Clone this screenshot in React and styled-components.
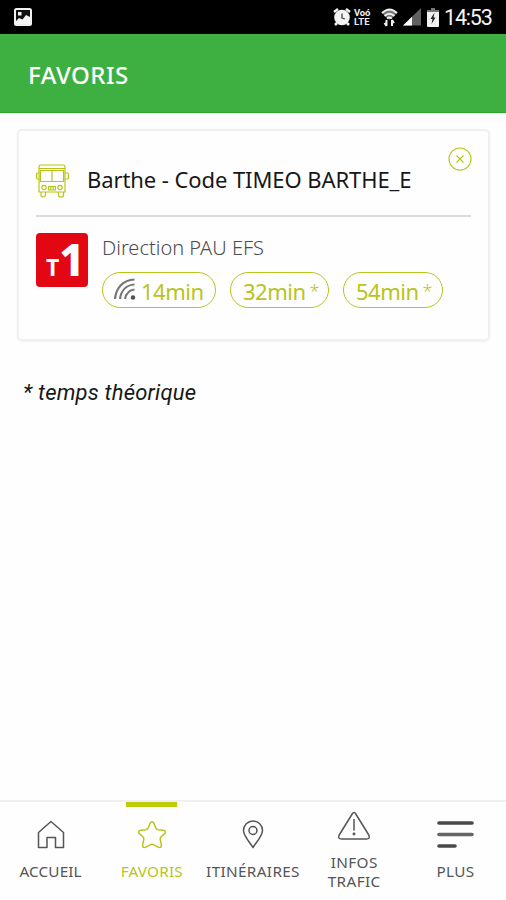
import React from "react";
import styled, { createGlobalStyle } from "styled-components";

const LIME = "#b9c41b";

const GlobalStyle = createGlobalStyle`
  *, *::before, *::after { box-sizing: border-box; }
  body { margin: 0; background: #fff; font-family: "Noto Sans", "Open Sans", sans-serif; }
`;

const Screen = styled.div`
  width: 506px;
  height: 900px;
  display: flex;
  flex-direction: column;
  background: #fefefe;
  overflow: hidden;
`;

const StatusBar = styled.div`
  height: 34px;
  flex: none;
  background: #000;
  display: flex;
  align-items: center;
  justify-content: space-between;
  padding: 0 14px;
`;

const StatusIcons = styled.div`
  display: flex;
  align-items: center;
  height: 34px;
`;

const StatusGlyph = styled.svg`
  display: block;
  flex: none;
  margin-right: ${(p) => p.$gap || 0}px;
`;

const Volte = styled.div`
  width: 18px;
  margin-right: 9px;
  display: flex;
  flex-direction: column;
  gap: 1px;
  color: #eee;
  font: 700 9.5px/8px Roboto, sans-serif;
  white-space: nowrap;
`;

const VolteLine = styled.span`
  display: block;
  height: 8px;
  letter-spacing: ${(p) => p.$spacing || 0}px;
`;

const Clock = styled.div`
  width: 48px;
  color: #f4f4f4;
  font: 400 21.5px/34px Roboto, sans-serif;
  letter-spacing: -1.2px;
  white-space: nowrap;
  padding-top: 2px;
`;

const Header = styled.header`
  height: 79px;
  flex: none;
  background: #3eb041;
  border-bottom: 1px solid #25a32a;
  padding: 2px 0 0 28px;
  display: flex;
  align-items: center;
`;

const HeaderTitle = styled.h1`
  margin: 0;
  color: #fff;
  font-size: 24px;
  font-weight: 500;
  letter-spacing: 0.5px;
`;

const Main = styled.main`
  flex: 1;
  padding: 16px 16px 0 17px;
`;

const Card = styled.section`
  height: 212px;
  border: 2px solid #f0f0f0;
  border-radius: 5px;
  background: #fefefe;
  box-shadow: 0 1px 3px rgba(0, 0, 0, 0.05);
  padding: 0 17px;
`;

const StopRow = styled.div`
  height: 86px;
  border-bottom: 2px solid #dcdcdc;
  display: flex;
  align-items: flex-start;
`;

const BusIcon = styled.svg`
  flex: none;
  margin: 33px 18px 0 0;
`;

const StopName = styled.h2`
  margin: 30px 0 0;
  flex: 1;
  color: #171717;
  font-size: 22px;
  line-height: 36px;
  font-weight: 400;
  letter-spacing: -0.08px;
  white-space: nowrap;
`;

const CloseButton = styled.button`
  display: block;
  width: 24px;
  height: 24px;
  margin: 16px -1px 0 0;
  padding: 0;
  border: 0;
  background: none;
`;

const LineRow = styled.div`
  display: flex;
  padding-top: 16px;
`;

const LineBadge = styled.div`
  width: 52px;
  height: 54px;
  flex: none;
  border-radius: 4px;
  background: #e30613;
  color: #fff;
  display: flex;
  align-items: baseline;
  font-weight: 700;
  font-size: 23px;
  line-height: 53px;
  padding-left: 10px;
`;

const LineNumber = styled.span`
  font-size: 44px;
  font-weight: 800;
`;

const Departures = styled.div`
  margin-left: 14px;
`;

const Direction = styled.div`
  height: 24px;
  color: #4c4c4c;
  font-size: 20px;
  line-height: 29px;
  font-weight: 300;
  white-space: nowrap;
`;

const Times = styled.div`
  display: flex;
  gap: 14px;
  margin-top: 15px;
`;

const TimePill = styled.div`
  width: ${(p) => p.$width}px;
  height: 36px;
  border: 1.5px solid ${LIME};
  border-radius: 18px;
  color: ${LIME};
  display: flex;
  align-items: center;
  padding-left: 12px;
  padding-top: 1px;
  font-size: 22px;
  letter-spacing: -0.5px;
  white-space: nowrap;
`;

const SignalIcon = styled.svg`
  flex: none;
  margin: -3px 5px 0 -1px;
`;

const Star = styled.span`
  font-size: 18px;
  font-weight: 300;
  margin-left: 4px;
`;

const Note = styled.p`
  margin: 36px 0 0 6px;
  color: #181818;
  font: italic 400 22px/32px Roboto, sans-serif;
  letter-spacing: 0.2px;
  white-space: nowrap;
`;

const Nav = styled.nav`
  height: 100px;
  flex: none;
  border-top: 2px solid #f0f0f0;
  display: grid;
  grid-template-columns: repeat(5, 1fr);
`;

const Tab = styled.div`
  display: flex;
  flex-direction: column;
  align-items: center;
  color: ${(p) => (p.$active ? LIME : "#555")};
  font-size: 15.3px;
  line-height: 19px;
  letter-spacing: ${(p) => p.$spacing || 0}px;
  text-align: center;
  white-space: nowrap;
`;

const Marker = styled.div`
  width: 51px;
  height: 5px;
  background: ${(p) => (p.$active ? "#bdcb08" : "transparent")};
`;

const TabIcon = styled.svg`
  display: block;
  fill: none;
  stroke: currentColor;
  stroke-width: 1.5;
  stroke-linejoin: round;
  stroke-linecap: round;
  margin: ${(p) => (p.$raised ? "2px 0 10px" : "10px 0 11px")};
`;

const tabs = [
  {
    label: "ACCUEIL",
    spacing: 0.1,
    icon: <path d="M6.5 30.5V15.500L19 4.5 31.500 15.500V30.500H23.500V20.5H15V30.500Z" />,
  },
  {
    label: "FAVORIS",
    active: true,
    spacing: 0.2,
    icon: (
      <path d="M17.500 5.600Q19 3.200 20.500 5.600L23 11.200Q23.700 12.500 25.100 12.700L30.400 13.300Q34 14.200 31.300 16.900L27.900 20Q27 21 27.200 22.300L28.400 27.500Q28.600 31.600 25.200 30.100L20.600 27.700Q19 26.900 17.400 27.700L12.800 30.100Q9.400 31.600 9.600 27.500L10.800 22.300Q11 21 10.100 20L6.700 16.900Q4 14.200 7.600 13.300L12.900 12.700Q14.300 12.500 15 11.200Z" />
    ),
  },
  {
    label: "ITINÉRAIRES",
    spacing: 0.35,
    icon: (
      <>
        <path d="M19 30.500C16 25.500 9.500 19 9.500 13.500a9.500 9.500 0 0 1 19 0C28.500 19 22 25.500 19 30.500Z" />
        <circle cx="19" cy="13.500" r="4" />
      </>
    ),
  },
  {
    label: <>INFOS<br />TRAFIC</>,
    raised: true,
    spacing: 0.4,
    icon: (
      <>
        <path d="M17.200 5Q19 2 20.800 5L33.800 26Q35.500 30 31.500 30H6.500Q2.500 30 4.200 26Z" />
        <path d="M19 10.500V21" />
        <circle cx="19" cy="25" r=".7" fill="currentColor" />
      </>
    ),
  },
  {
    label: "PLUS",
    spacing: 0.3,
    icon: (
      <g strokeWidth="3.600" stroke="#494949">
        <path d="M3 6H36" />
        <path d="M3 17.500H36" stroke="#666" />
        <path d="M3 29H19" />
      </g>
    ),
  },
];

export default function App() {
  return (
    <Screen>
      <GlobalStyle />
      <StatusBar>
        <StatusGlyph width="18" height="18" viewBox="0 0 18 18">
          <rect x="1" y="1" width="16" height="16" rx="1.5" fill="#111" stroke="#f1f1f1" strokeWidth="2" />
          <path d="M2 13L5 10 8.500 11.500 12 7 16 9V16H2Z" fill="#f5f5f5" />
          <rect x="4" y="4" width="3.500" height="3.500" fill="#f5f5f5" />
        </StatusGlyph>
        <StatusIcons>
          <StatusGlyph $gap={3} width="18" height="18" viewBox="0 0 18 18">
            <circle cx="9" cy="9.500" r="7.800" fill="#f3f3f3" />
            <path d="M1 4L5 1M17 4L13 1M4 15L2 17M14 15L16 17" stroke="#f3f3f3" strokeWidth="2.500" />
            <path d="M9 5.500V10L12 11" fill="none" stroke="#444" strokeWidth="1.300" />
          </StatusGlyph>
          <Volte>
            <VolteLine $spacing={-0.2}>Voó</VolteLine>
            <VolteLine $spacing={0.2}>LTE</VolteLine>
          </Volte>
          <StatusGlyph $gap={5} width="17" height="20" viewBox="0 0 17 20">
            <path d="M1 6Q8.500-1 16 6L8.500 13Z" fill="#777" />
            <path d="M1 6Q8.500-1 16 6M3.500 9Q8.500 4.500 13.500 9M6 11.500Q8.500 9.500 11 11.500" fill="none" stroke="#ededed" strokeWidth="2" />
            <path d="M5.500 13V19M3.500 16L5.500 19M11 19V13M13 16L11 13" fill="none" stroke="#eee" strokeWidth="2" />
          </StatusGlyph>
          <StatusGlyph $gap={6} width="18" height="18" viewBox="0 0 18 18">
            <path d="M0 17.500L18 0V17.500Z" fill="#606060" />
            <path d="M0 17.500L9 8.700V17.500Z" fill="#fff" />
          </StatusGlyph>
          <StatusGlyph $gap={5} width="12" height="19" viewBox="0 0 12 19">
            <path d="M4 0H8V2H12V5H0V2H4Z" fill="#777" />
            <path d="M0 4H12V18Q12 19 11 19H1Q0 19 0 18Z" fill="#f3f3f3" />
            <path d="M7.500 4.500L3.500 11H5.500L4.500 16 8.500 9.500H6.500Z" fill="#222" />
          </StatusGlyph>
          <Clock>14:53</Clock>
        </StatusIcons>
      </StatusBar>

      <Header>
        <HeaderTitle>FAVORIS</HeaderTitle>
      </Header>

      <Main>
        <Card>
          <StopRow>
            <BusIcon width="33" height="34" viewBox="0 0 33 34" fill="none" stroke={LIME} strokeWidth="1.200">
              <path d="M3 28V3Q3 1 5 1H27Q29 1 29 3V28ZM3 4.500H29M4.500 6.500H27.500V17.500H4.500ZM16 6.500V17.500M3 9H1Q0.600 9 .6 10V14Q.6 15 1.500 15H3M29 9H31.500Q32.400 9 32.400 10V14Q32.400 15 31.500 15H29" />
              <circle cx="8" cy="23.500" r="2.200" />
              <circle cx="24" cy="23.500" r="2.200" />
              <path d="M12.500 22.500H19.500V26H12.500ZM14.800 22.500V26M17.200 22.500V26M5 28V31Q5 33 7 33T9.500 31V28M22.500 28V31Q22.500 33 25 33T27.500 31V28" />
            </BusIcon>
            <StopName>Barthe - Code TIMEO BARTHE_E</StopName>
            <CloseButton aria-label="Supprimer">
              <svg width="24" height="24" viewBox="0 0 24 24" fill="none" stroke={LIME} strokeWidth="1.100">
                <circle cx="12" cy="12" r="11" />
                <path d="M8.500 8.500L15.500 15.500M15.500 8.500L8.500 15.500" />
              </svg>
            </CloseButton>
          </StopRow>
          <LineRow>
            <LineBadge>
              <span>T</span>
              <LineNumber>1</LineNumber>
            </LineBadge>
            <Departures>
              <Direction>Direction PAU EFS</Direction>
              <Times>
                <TimePill $width={114}>
                  <SignalIcon width="22" height="22" viewBox="0 0 22 22" fill="none" stroke="#777" strokeWidth="2.200">
                    <path d="M1 21C2 10 9 2 20.500 1.500M6 21C7 13 12 7 20.500 6.500M11 21C12 16 15 12 20.500 11.500" />
                    <circle cx="19" cy="19.500" r="1.200" fill="#555" stroke="#555" />
                  </SignalIcon>
                  14min
                </TimePill>
                <TimePill $width={99}>32min<Star>*</Star></TimePill>
                <TimePill $width={100}>54min<Star>*</Star></TimePill>
              </Times>
            </Departures>
          </LineRow>
        </Card>
        <Note>* temps théorique</Note>
      </Main>

      <Nav>
        {tabs.map((tab, index) => (
          <Tab key={index} $active={tab.active} $spacing={tab.spacing}>
            <Marker $active={tab.active} />
            <TabIcon $raised={tab.raised} width="38" height="34" viewBox="0 0 38 34">
              {tab.icon}
            </TabIcon>
            <span>{tab.label}</span>
          </Tab>
        ))}
      </Nav>
    </Screen>
  );
}
